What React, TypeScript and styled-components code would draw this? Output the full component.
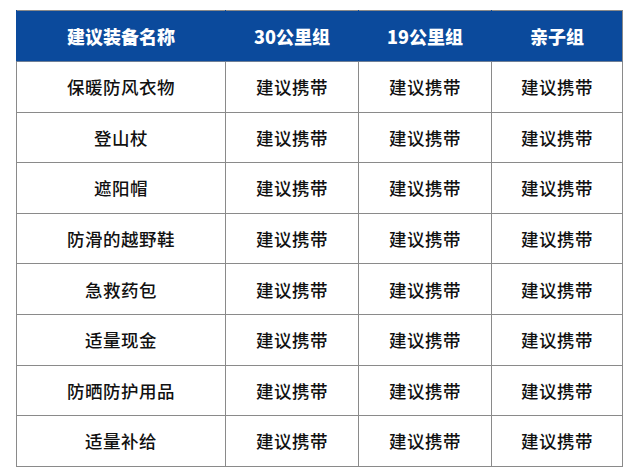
import React from "react";
import styled, { createGlobalStyle } from "styled-components";

const GlobalStyle = createGlobalStyle`
    body {
        margin: 0;
        background: #ffffff;
        font-family: "Noto Sans CJK SC", "Noto Sans", sans-serif;
    }
`;

const Page = styled.div`
    padding: 10px 18px 0 16px;
`;

const Table = styled.table`
    width: 606px;
    border-collapse: collapse;
    table-layout: fixed;
    border: 1px solid #8a8a8a;
`;

const HeadCell = styled.th`
    height: 50px;
    padding: 0;
    background: #0b4a9c;
    color: #ffffff;
    font-size: 18px;
    font-weight: 900;
    text-align: center;
    border-left: 1px solid #0b4a9c;
    border-bottom: 1px solid #6f7f96;
`;

const Cell = styled.td`
    height: 49.6px;
    padding: 0;
    color: #111111;
    font-size: 17.5px;
    font-weight: 500;
    text-align: center;
    border: 1px solid #8a8a8a;
    letter-spacing: 0.5px;
`;

const columns = [
    { title: "建议装备名称", width: 209 },
    { title: "30公里组", width: 133 },
    { title: "19公里组", width: 133 },
    { title: "亲子组", width: 131 },
];

const items = [
    "保暖防风衣物",
    "登山杖",
    "遮阳帽",
    "防滑的越野鞋",
    "急救药包",
    "适量现金",
    "防晒防护用品",
    "适量补给",
];

const App = () => {
    return (
        <Page>
            <GlobalStyle />
            <Table>
                <colgroup>
                    {columns.map(c => (
                        <col key={c.title} style={{ width: c.width }} />
                    ))}
                </colgroup>
                <thead>
                    <tr>
                        {columns.map(c => (
                            <HeadCell key={c.title}>{c.title}</HeadCell>
                        ))}
                    </tr>
                </thead>
                <tbody>
                    {items.map(item => (
                        <tr key={item}>
                            <Cell>{item}</Cell>
                            <Cell>建议携带</Cell>
                            <Cell>建议携带</Cell>
                            <Cell>建议携带</Cell>
                        </tr>
                    ))}
                </tbody>
            </Table>
        </Page>
    );
};

export default App;
